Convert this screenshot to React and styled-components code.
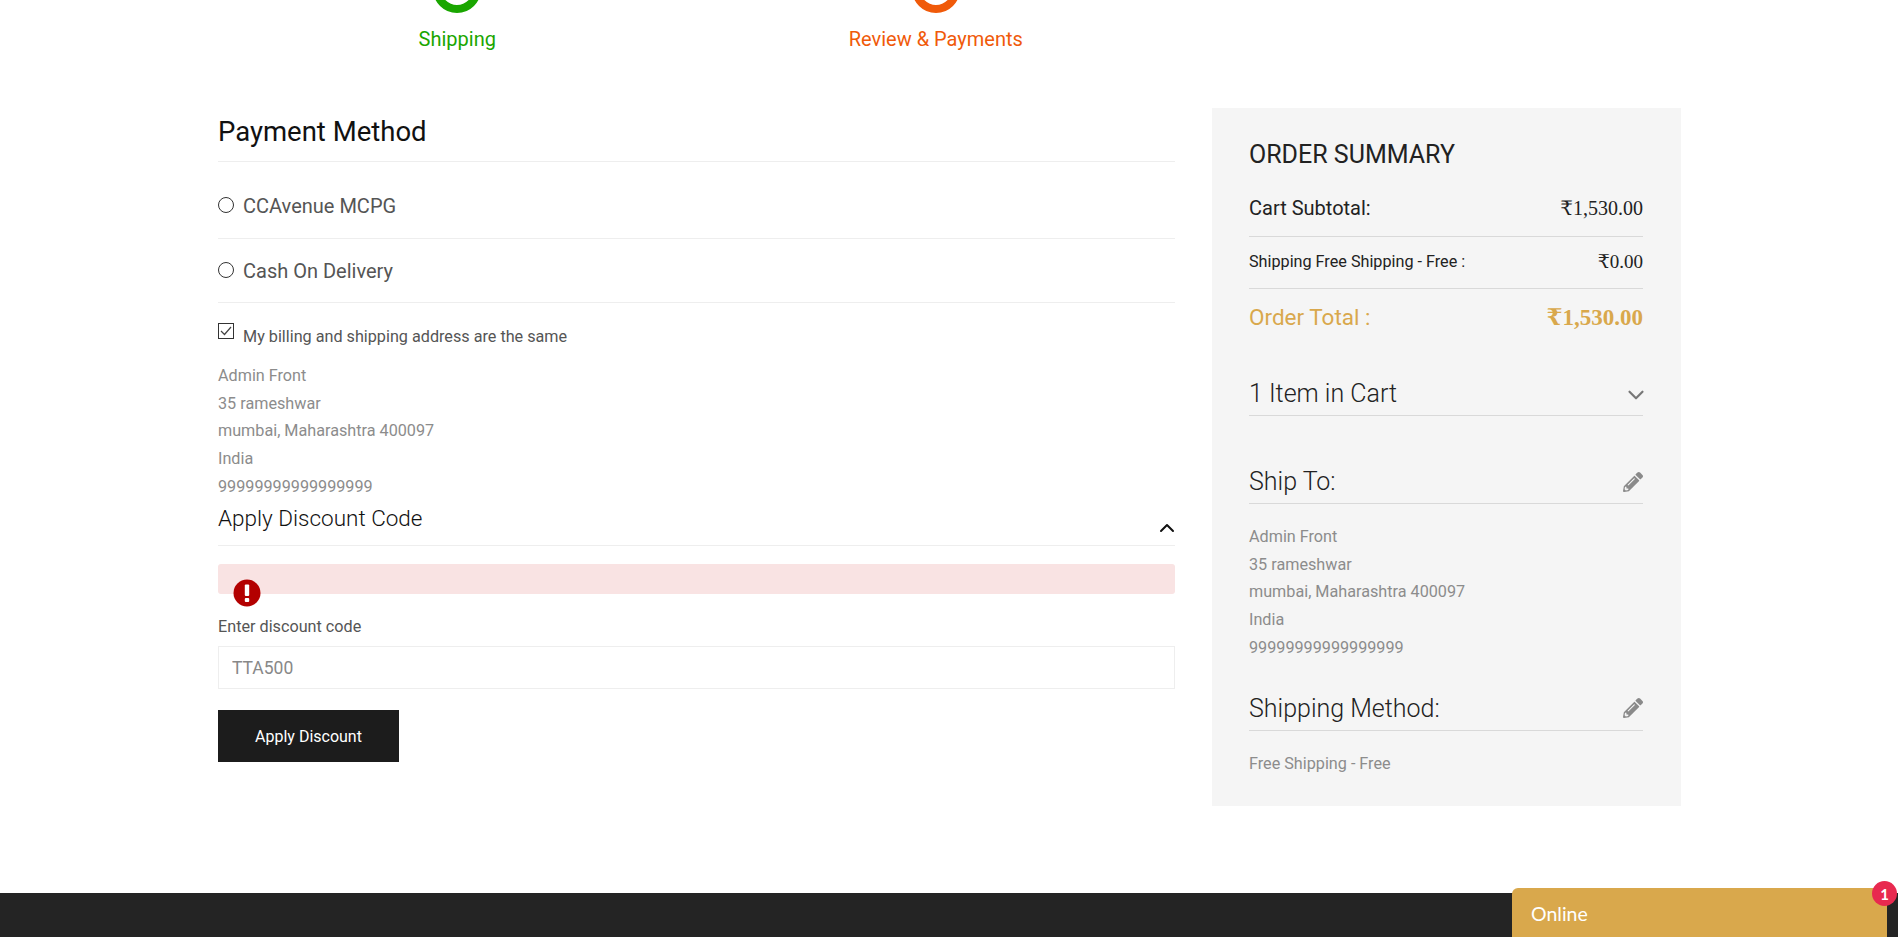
import React from 'react';
import styled, { createGlobalStyle } from 'styled-components';
import { FaPencilAlt } from 'react-icons/fa';
import { FiChevronDown, FiChevronUp } from 'react-icons/fi';

const GlobalStyle = createGlobalStyle`
  html, body {
    margin: 0;
    padding: 0;
    height: 937px;
    overflow: hidden;
    background: #fff;
    font-family: Roboto, "Liberation Sans", sans-serif;
    color: #222;
  }
  * { box-sizing: border-box; }
`;

const Page = styled.div`
  position: relative;
  height: 937px;
  display: flex;
  flex-direction: column;
  overflow: hidden;
`;

const Steps = styled.div`
  display: flex;
  margin: -35px 0 0 218px;
  width: 957px;
`;

const Step = styled.div`
  width: 479px;
  display: flex;
  flex-direction: column;
  align-items: center;
  color: ${({ color }) => color};
  font-size: 20px;
  line-height: 24px;
`;

const StepDot = styled.span`
  width: 48px;
  height: 48px;
  border-radius: 50%;
  border: 8px solid ${({ color }) => color};
  margin-bottom: 14px;
`;

const Content = styled.div`
  display: flex;
  align-items: flex-start;
  margin: 57px 0 0 218px;
  width: 1463px;
  gap: 37px;
`;

const Main = styled.div`
  width: 957px;
`;

const MainTitle = styled.h2`
  margin: 0;
  padding: 8px 0 13px;
  font-size: 27.5px;
  line-height: 32px;
  font-weight: 400;
  color: #111;
  border-bottom: 1px solid #eee;
`;

const MethodRow = styled.label`
  display: flex;
  align-items: center;
  height: ${({ h }) => h}px;
  padding-top: ${({ pt }) => pt || 0}px;
  gap: 9px;
  font-size: 20px;
  color: #555;
  border-bottom: 1px solid #eee;
`;

const Radio = styled.span`
  width: 16px;
  height: 16px;
  border: 1px solid #333;
  border-radius: 50%;
  margin-top: -2px;
`;

const SameRow = styled.div`
  display: flex;
  align-items: flex-start;
  gap: 9px;
  margin-top: 20px;
  font-size: 16.2px;
  line-height: 22px;
  color: #555;
`;

const CheckBox = styled.span`
  width: 16px;
  height: 16px;
  border: 1px solid #333;
  display: flex;
  align-items: center;
  justify-content: center;
  background: #fff;
`;

const SameText = styled.span`
  margin-top: 3px;
`;

const Address = styled.div`
  margin-top: ${({ top }) => top}px;
  font-size: 16.2px;
  line-height: 27.7px;
  color: #8c8c8c;
`;

const DiscountHead = styled.div`
  display: flex;
  justify-content: space-between;
  height: 45px;
  padding-top: 2px;
  font-size: 22.5px;
  font-weight: 300;
  line-height: 30px;
  color: #111;
  border-bottom: 1px solid #eee;
`;

const UpIcon = styled(FiChevronUp)`
  font-size: 24px;
  margin: 13px -4px 0 0;
  color: #111;
`;

const Alert = styled.div`
  position: relative;
  height: 30px;
  margin-top: 18px;
  background: #f9e3e3;
  border-radius: 3px;
`;

const AlertIcon = styled.svg`
  position: absolute;
  left: 15px;
  top: 15px;
  width: 28px;
  height: 28px;
`;

const FieldLabel = styled.div`
  margin-top: 23px;
  font-size: 16.2px;
  line-height: 20px;
  color: #555;
`;

const CodeInput = styled.input`
  display: block;
  width: 100%;
  height: 43px;
  margin-top: 9px;
  padding: 1px 13px 0;
  border: 1px solid #eee;
  font: 400 17.5px Roboto, sans-serif;
  color: #888;
`;

const ApplyButton = styled.button`
  display: block;
  width: 181px;
  height: 52px;
  margin-top: 21px;
  padding: 1px 0 0;
  border: 0;
  background: #1c1c1c;
  color: #fff;
  font: 400 16px Roboto, sans-serif;
`;

const Summary = styled.aside`
  width: 469px;
  height: 698px;
  padding: 32px 38px 0 37px;
  background: #f5f5f5;
`;

const SummaryTitle = styled.h3`
  margin: 0;
  font-size: 25px;
  line-height: 30px;
  font-weight: 400;
  color: #222;
`;

const PriceRow = styled.div`
  display: flex;
  justify-content: space-between;
  align-items: center;
  height: ${({ h }) => h}px;
  padding: ${({ pt }) => pt || 0}px 0 ${({ pb }) => pb || 0}px;
  font-size: ${({ size }) => size}px;
  color: ${({ color }) => color || '#222'};
  border-bottom: ${({ plain }) => (plain ? 'none' : '1px solid #d9d9d9')};
`;

const Price = styled.span`
  font-family: "Liberation Serif", "DejaVu Serif", serif;
  font-size: ${({ size }) => size}px;
  font-weight: ${({ bold }) => (bold ? 700 : 400)};
`;

const SectionHead = styled.div`
  display: flex;
  justify-content: space-between;
  align-items: center;
  height: 50px;
  padding-top: 6px;
  margin-top: ${({ top }) => top}px;
  font-size: 25px;
  font-weight: 300;
  color: #222;
  border-bottom: 1px solid #d9d9d9;
`;

const DownIcon = styled(FiChevronDown)`
  font-size: 26px;
  margin: 2px -6px 0 0;
  color: #777;
`;

const EditIcon = styled(FaPencilAlt)`
  font-size: 20px;
  color: #8a8a8a;
`;

const FooterBar = styled.footer`
  margin-top: auto;
  height: 44px;
  background: #242424;
`;

const Chat = styled.div`
  position: absolute;
  left: 1512px;
  top: 888px;
  width: 375px;
  height: 49px;
  padding: 2px 19px 0;
  display: flex;
  align-items: center;
  background: #d9a84c;
  border-radius: 6px 6px 0 0;
  color: #fff;
  font-family: Lato, sans-serif;
  font-size: 19.5px;
`;

const Badge = styled.span`
  position: absolute;
  right: -10px;
  top: -7px;
  width: 25px;
  height: 25px;
  border-radius: 50%;
  background: #e8294f;
  color: #fff;
  font-size: 15px;
  font-weight: 700;
  display: flex;
  align-items: center;
  justify-content: center;
`;

const addressLines = ['Admin Front', '35 rameshwar', 'mumbai, Maharashtra 400097', 'India', '99999999999999999'];

const AddressBlock = ({ top }) => (
  <Address top={top}>
    {addressLines.map((line) => (
      <div key={line}>{line}</div>
    ))}
  </Address>
);

const App = () => (
  <Page>
    <GlobalStyle />
    <Steps>
      <Step color="#1aa600">
        <StepDot color="#1aa600" />
        Shipping
      </Step>
      <Step color="#f05a0a">
        <StepDot color="#f05a0a" />
        Review &amp; Payments
      </Step>
    </Steps>

    <Content>
      <Main>
        <MainTitle>Payment Method</MainTitle>
        <MethodRow h={77} pt={12}>
          <Radio />
          CCAvenue MCPG
        </MethodRow>
        <MethodRow h={64}>
          <Radio />
          Cash On Delivery
        </MethodRow>
        <SameRow>
          <CheckBox>
            <svg width="12" height="10" viewBox="0 0 12 10" fill="none">
              <path d="M1 5l3.5 3.5L11 1" stroke="#444" strokeWidth="1.2" />
            </svg>
          </CheckBox>
          <SameText>My billing and shipping address are the same</SameText>
        </SameRow>
        <AddressBlock top={14} />
        <DiscountHead>
          Apply Discount Code
          <UpIcon />
        </DiscountHead>
        <Alert>
          <AlertIcon viewBox="0 0 28 28">
            <circle cx="14" cy="14" r="13.5" fill="#b30000" />
            <rect x="11.8" y="5.5" width="4.4" height="11.5" rx="1" fill="#fff" />
            <rect x="11.8" y="19" width="4.4" height="4" rx="1" fill="#fff" />
          </AlertIcon>
        </Alert>
        <FieldLabel>Enter discount code</FieldLabel>
        <CodeInput defaultValue="TTA500" />
        <ApplyButton>Apply Discount</ApplyButton>
      </Main>

      <Summary>
        <SummaryTitle>ORDER SUMMARY</SummaryTitle>
        <PriceRow h={67} pt={10} size={20}>
          Cart Subtotal:
          <Price size={20}>₹1,530.00</Price>
        </PriceRow>
        <PriceRow h={52} pb={2} size={16.2}>
          Shipping Free Shipping - Free :
          <Price size={19}>₹0.00</Price>
        </PriceRow>
        <PriceRow h={58} pb={2} size={22.5} color="#d9a84c" plain>
          Order Total :
          <Price size={23} bold>₹1,530.00</Price>
        </PriceRow>
        <SectionHead top={19}>
          1 Item in Cart
          <DownIcon />
        </SectionHead>
        <SectionHead top={38}>
          Ship To:
          <EditIcon />
        </SectionHead>
        <AddressBlock top={19} />
        <SectionHead top={19}>
          Shipping Method:
          <EditIcon />
        </SectionHead>
        <Address top={19}>Free Shipping - Free</Address>
      </Summary>
    </Content>

    <FooterBar />
    <Chat>
      Online
      <Badge>1</Badge>
    </Chat>
  </Page>
);

export default App;
